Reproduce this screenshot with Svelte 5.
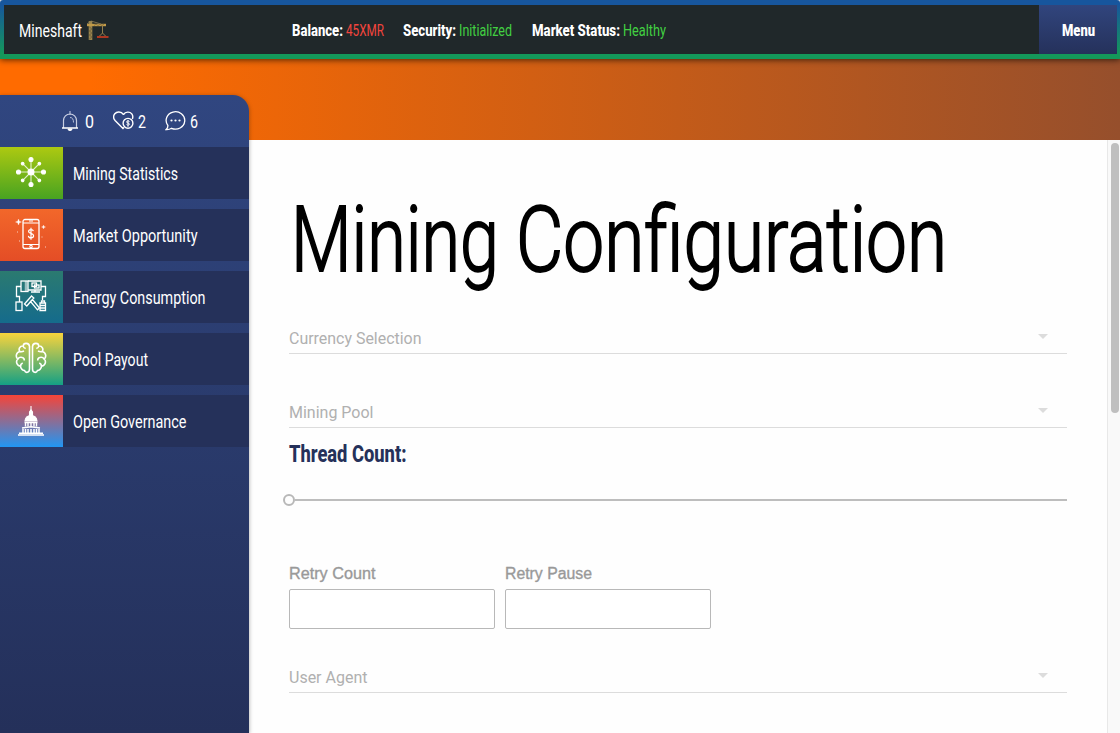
<script>
  const stats = [
    { label: 'Balance:', value: '45XMR', lw: 51, vw: 38, color: '#f2453d' },
    { label: 'Security:', value: 'Initialized', lw: 53, vw: 53, color: '#42d042' },
    { label: 'Market Status:', value: 'Healthy', lw: 88, vw: 43, color: '#42d042' }
  ];
  const items = [
    { name: 'Mining Statistics', w: 105, icon: 'hub', from: '#adc911', to: '#48a321' },
    { name: 'Market Opportunity', w: 124.5, icon: 'phone', from: '#f2672a', to: '#e44d26' },
    { name: 'Energy Consumption', w: 132.5, icon: 'energy', from: '#2b7a70', to: '#156b8c' },
    { name: 'Pool Payout', w: 75, icon: 'brain', from: '#f9d33c', to: '#14a085' },
    { name: 'Open Governance', w: 113.5, icon: 'capitol', from: '#f64438', to: '#2196f3' }
  ];
  const spokes = [0, 45, 90, 135, 180, 225, 270, 315];
</script>

{#snippet fit(text, w, size, weight, color, family = 'Roboto')}
  <svg class="fit" width={w} height={size} role="img" aria-label={text}>
    <text x="0" y={size * 0.86} textLength={w} lengthAdjust="spacingAndGlyphs" font-size={size} font-weight={weight} fill={color} font-family="{family}, sans-serif">{text}</text>
  </svg>
{/snippet}

{#snippet caret()}
  <svg class="caret" width="10" height="5"><path d="M0 0h10L5 5z" fill="#dcdcdc" /></svg>
{/snippet}

{#snippet select(text, w)}
  <div class="select">
    {@render fit(text, w, 16, 400, '#b0b0b0')}
    {@render caret()}
  </div>
{/snippet}

<div class="page">
  <header>
    <div class="brand">
      {@render fit('Mineshaft', 63, 18, 400, '#fff')}
      <svg width="22" height="21" viewBox="0 0 22 21" fill="none">
        <path d="M3.500 1v19" stroke="#9b854c" stroke-width="3.600" />
        <path d="M2.400 7l2.400 2-2.400 2 2.400 2-2.400 2 2.400 2-2.400 2" stroke="#63583b" stroke-width=".8" />
        <path d="M0 5h19" stroke="#c19a48" stroke-width="2.400" />
        <path d="M0 4L4 1l10 3" stroke="#8b7d58" stroke-width=".8" />
        <path d="M7 5.500l2-1.500L11 5.500l2-1.500L15 5.500l2-1.500" stroke="#75633b" stroke-width=".7" />
        <path d="M15.500 6v7M12.500 16l3-3 3 3" stroke="#94804e" stroke-width="1" />
        <path d="M10 17h11.500" stroke="#c03a22" stroke-width="1.800" />
      </svg>
    </div>
    <div class="stats">
      {#each stats as s}
        <div class="stat">
          {@render fit(s.label, s.lw, 16.5, 800, '#fff')}
          {@render fit(s.value, s.vw, 16.5, 400, s.color)}
        </div>
      {/each}
    </div>
    <button class="menu">{@render fit('Menu', 33, 16.5, 900, '#fff')}</button>
  </header>

  <div class="banner"></div>

  <aside>
    <div class="counts">
      <div class="count">
        <svg width="18" height="20" viewBox="0 0 18 20" fill="none" stroke="#fff">
          <path d="M9 0v4" stroke="#aab4d2" stroke-width="1.3" />
          <path d="M2.5 17V9.5a6.500 6.500 0 0 1 13 0V17" stroke="#c7cee2" stroke-width="1.2" />
          <path d="M9 6.500q3.500 0 3.500 5" stroke="#b8c1da" />
          <path d="M1 17h16" stroke-width="1.4" /><path d="M7 18a2 1.500 0 0 0 4 0z" fill="#fff" />
        </svg>
        {@render fit('0', 9, 19, 400, '#fff')}
      </div>
      <div class="count">
        <svg width="21" height="20" viewBox="0 0 21 20" fill="none" stroke="#fff" stroke-width="1.4">
          <path d="M10.500 3.500C8 .2 3.800.4 1.800 2.800-.1 5.200.7 8 2.300 9.800L10 17.500l1-1M10.500 3.500c2-3 6.400-3 8.300-.6 1.100 1.400 1.200 3.300.6 5" />
          <circle cx="15" cy="12.300" r="4.900" />
          <path d="M16.500 10.600c-.7-1-3-.8-3 .4s3 .9 3 2.100-2.300 1.400-3 .3M15 9v6.800" stroke-width="1" />
        </svg>
        {@render fit('2', 8, 19, 400, '#fff')}
      </div>
      <div class="count">
        <svg width="21" height="20" viewBox="0 0 21 20" fill="none" stroke="#fff" stroke-width="1.3">
          <path d="M2.900 14.500A9.300 8.700 0 1 1 6.500 17.300Q4.200 18.800 1.200 18.600Q3 17 2.900 14.500z" />
          <g fill="#fff" stroke="none"><circle cx="6.500" cy="9.500" r="1.1" /><circle cx="10.500" cy="9.500" r="1.1" /><circle cx="14.500" cy="9.500" r="1.1" /></g>
        </svg>
        {@render fit('6', 8, 19, 400, '#fff')}
      </div>
    </div>
    <nav>
      {#each items as it}
        <div class="item">
          <div class="tile" style="background: linear-gradient({it.from}, {it.to})">
            <svg width="32" height="32" viewBox="0 0 32 32" fill="none" stroke="#fff" stroke-width="1.1">
              {#if it.icon === 'hub'}
                <circle cx="16" cy="16" r="3" fill="#fff" />
                {#each spokes as a, i}
                  <g transform="rotate({a} 16 16)">
                    <path d={i % 2 ? 'M16 16V5' : 'M16 16V3'} opacity=".8" />
                    <circle cx="16" cy={i % 2 ? 4.2 : 3.5} r={i % 2 ? 1.3 : 2} fill="#fff" />
                  </g>
                {/each}
              {:else if it.icon === 'phone'}
                <rect x="8" y="1.500" width="16" height="29" rx="2" stroke-width="1.3" />
                <path d="M8 5h16M8 26.500h16M14 3h4" /><circle cx="16" cy="28.500" r="1.2" />
                <path d="M18.400 13.200c-.6-2.300-4.800-2.100-4.800.2 0 2.500 5 1.500 5 4.400 0 2.600-4.800 2.800-5.200 0M16 9.800v12" stroke-width="1.2" />
                <path d="M3.500 1l.8 2.200L6.500 4l-2.200.8L3.500 7l-.8-2.200L.5 4l2.200-.8zM28.500 7l.5 1.500 1.500.5-1.500.5-.5 1.500-.5-1.500-1.500-.5 1.500-.5z" fill="#fff" stroke-width=".3" />
                <path d="M2 14h1M4 23h1M26.500 19h1M30 29h1" opacity=".7" />
              {:else if it.icon === 'energy'}
                <g stroke-width="1.3">
                  <rect x="6" y="1" width="7" height="10.500" /><path d="M11 1v10.500" stroke-width="2.500" opacity=".55" />
                  <path d="M13 1h13v9H13" /><path d="M16 12h9M20 10v2" />
                  <rect x="17" y="3" width="4.500" height="3.500" /><rect x="19.500" y="5" width="4.500" height="3" />
                  <path d="M6 6.500H1.500v10h3V22M26 6.500h4.500v10h-3V20" />
                  <rect x="1" y="22" width="6" height="8.500" /><path d="M25 23h5.500v7.500H25zM26.500 23v-2h3v2M25 25.500h5.500M25 28h5.500" />
                  <path d="M9.500 24l7-8 2.300 2-7 8zM15.500 21.500l2-2 7 8.500-2 1.800z" />
                </g>
              {:else if it.icon === 'brain'}
                {#each [0, 1] as side}
                  <g transform={side ? 'translate(32 0) scale(-1 1)' : ''} stroke-width="1.6">
                    <path d="M14.500 4.500C14.200.6 8.500.3 8.200 4 4.500 3.800 3.300 7.500 4.800 9.500.8 10.500.4 15 2.800 17 .3 19.500 2 24 5.500 24 5.600 27 8 28.500 9.500 28.500c1 2.800 5 2.500 5-1.500z" />
                    <path d="M8.200 4q.3 2 2.500 2.500M4.800 9.500q2 .6 4.200-.5M2.800 17q1.700-2.500 4.500-1.500M7.300 15.500q2 .5 2 3M5.500 24q0-2 2.200-3" />
                  </g>
                {/each}
              {:else}
                <path d="M16 2v5" />
                <path d="M14.500 12V8l1.500-2 1.500 2v4zM10 17q.5-5.500 6-5.500t6 5.500z" fill="#fff" />
                <path d="M9.500 18.500h13M10.500 19v3.500M13 19v3.500M16 19v3.500M19 19v3.500M21.500 19v3.500" stroke-width="1.4" />
                <path d="M7 24l9-1.300 9 1.300M8 25v4M10.500 25v4M13 25v4M16 25v4M19 25v4M21.500 25v4M24 25v4" stroke-width="1.5" />
                <path d="M4 29.200h24M3 31h26" stroke-width="1.4" />
              {/if}
            </svg>
          </div>
          {@render fit(it.name, it.w, 18, 400, '#fff')}
        </div>
      {/each}
    </nav>
  </aside>

  <main>
    <h1>
      {@render fit('Mining', 208, 90, 300, '#000')}
      {@render fit('Configuration', 431, 90, 300, '#000')}
    </h1>
    {@render select('Currency Selection', 132.5)}
    {@render select('Mining Pool', 84.5)}
    <div class="threads">{@render fit('Thread Count:', 117.5, 23.5, 800, '#25315a')}</div>
    <div class="slider"><span class="knob"></span><span class="rail"></span></div>
    <div class="inputs">
      <label>{@render fit('Retry Count', 86.5, 16, 400, '#999', 'Liberation Sans')}<input /></label>
      <label>{@render fit('Retry Pause', 87, 16, 400, '#999', 'Liberation Sans')}<input /></label>
    </div>
    {@render select('User Agent', 78.5)}
  </main>
  <div class="scroll"><div class="thumb"></div></div>
</div>

<style>
  :global(body) { margin: 0; overflow: hidden; }
  .page {
    width: 1120px; height: 733px; overflow: hidden; background: #fefefe;
    display: grid; grid-template-columns: 249px 1fr 13px; grid-template-rows: 59px 36px 45px 1fr;
    font-family: Roboto, sans-serif;
  }
  .fit { display: block; overflow: visible; flex: none; }
  header {
    grid-area: 1 / 1 / 2 / 4; z-index: 2; box-sizing: border-box; padding: 5px 3px 5px 4px;
    display: grid; grid-template-columns: 288px 1fr 78px; border-radius: 3px 3px 0 0;
    background: linear-gradient(#20282a, #20282a) content-box, linear-gradient(#17569d 8%, #14985a 92%);
    box-shadow: 0 1px 6px rgba(0, 0, 0, .65);
  }
  .brand { display: flex; align-items: center; gap: 5px; padding: 2px 0 0 15px; }
  .brand > svg:last-child { margin-top: -1px; }
  .stats { display: flex; align-items: center; gap: 20px; padding-top: 2px; }
  .stat { display: flex; gap: 3px; }
  .stat:nth-child(2) { margin-left: -1px; }
  .menu {
    border: 0; padding: 2px 0 0; display: flex; align-items: center; justify-content: center;
    background: linear-gradient(#31457d, #25315b);
  }
  .banner { grid-area: 2 / 1 / 4 / 4; background: linear-gradient(90deg, #ff6b00 8%, #964f2c); }
  aside {
    grid-area: 3 / 1 / 5 / 2; z-index: 1; border-radius: 0 16px 0 0; overflow: hidden;
    background: linear-gradient(#304680, #24305a); box-shadow: 0 1px 4px rgba(0, 0, 0, .35);
  }
  .counts { height: 52px; display: flex; align-items: center; gap: 19px; padding-left: 61px; }
  .count { display: flex; align-items: center; gap: 4px; }
  .count:first-child { gap: 6px; }
  nav { display: flex; flex-direction: column; gap: 10px; }
  .item { height: 52px; display: flex; align-items: center; gap: 10px; background: #25315a; }
  .item > :global(.fit) { margin-top: 2px; }
  .tile { width: 63px; height: 52px; display: flex; align-items: center; justify-content: center; flex: none; }
  .tile svg { margin: -2px 1px 0 0; }
  main { grid-area: 4 / 2 / 5 / 3; padding: 53px 40px 0 40px; background: #fefefe; }
  h1 { margin: 0 0 26px; height: 100px; box-sizing: border-box; display: flex; gap: 17px; padding: 1px 0 0 2px; }
  h1 :global(text) { stroke: #000; stroke-width: 1.9px; }
  .select {
    height: 35px; box-sizing: border-box; border-bottom: 1px solid #dcdcdc; margin-bottom: 39px;
    display: flex; justify-content: space-between; align-items: flex-start; padding: 11px 19px 0 0;
  }
  .caret { margin-top: 4px; }
  .select + .threads { margin-top: -39px; }
  .threads { height: 62px; padding-top: 14px; box-sizing: border-box; }
  .slider { height: 20px; display: flex; align-items: center; margin-left: -6px; }
  .knob { width: 12px; height: 12px; box-sizing: border-box; border: 2px solid #b8b8b8; border-radius: 50%; }
  .rail { flex: 1; height: 2px; background: #bdbdbd; }
  .inputs { display: flex; gap: 10px; margin: 55px 0 29px; }
  label { display: flex; flex-direction: column; gap: 8px; }
  label :global(text) { stroke: #999; stroke-width: .35px; }
  input { width: 206px; height: 40px; box-sizing: border-box; border: 1px solid #b8b8b8; border-radius: 2px; background: #fff; padding: 0; }
  .scroll { grid-area: 4 / 3 / 5 / 4; background: #f9f9f9; border-left: 1px solid #e8e8e8; padding: 3px 0 0 3px; }
  .thumb { width: 8px; height: 270px; border-radius: 4px; background: #bfbfbf; }
</style>
